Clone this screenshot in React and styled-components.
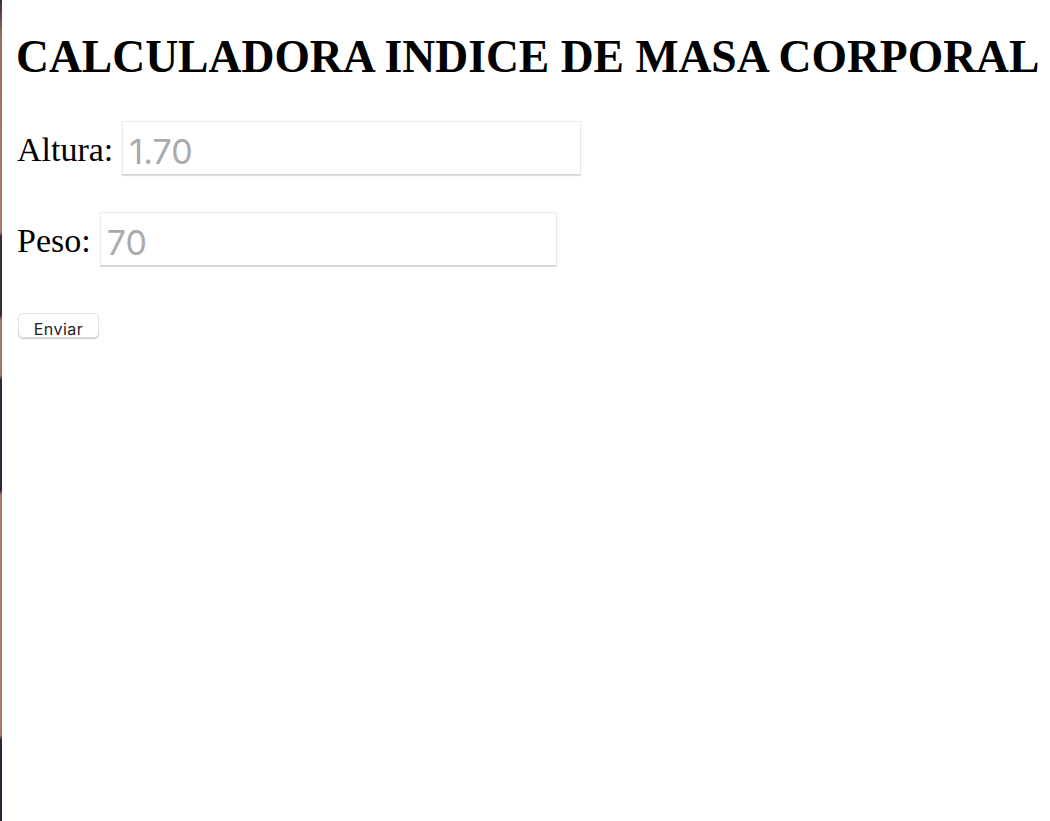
import React from "react";
import styled, { createGlobalStyle } from "styled-components";

// Estilos globales (incluye la franja del fondo de escritorio a la izquierda)
const GlobalStyle = createGlobalStyle`
    html, body {
        margin: 0;
        min-height: 100%;
    }
    body {
        min-height: 821px;
        font-family: "Liberation Serif", "Times New Roman", serif;
        background:
            linear-gradient(
                to bottom,
                #3b2b3a 0px, #9a705e 36px, #a87c68 232px,
                #3a2a3b 236px, #3a2a3b 315px, #a07664 320px,
                #a07664 375px, #33263a 380px, #33263a 490px,
                #a67b68 495px, #a67b68 735px, #2d2238 740px, #2d2238 821px
            ) left top / 2px 821px no-repeat,
            #fff;
    }
`;

// Contenedor de la página
const Page = styled.main`
    display: flex;
    flex-direction: column;
    align-items: flex-start;
    padding: 29px 0 0 16px;
`;

// Título
const Title = styled.h1`
    margin: 0 0 36px;
    font-size: 45.6px;
    line-height: 56px;
    font-weight: bold;
    color: #000;
    white-space: nowrap;
`;

// Formulario
const Form = styled.form`
    display: flex;
    flex-direction: column;
    align-items: flex-start;
`;

// Fila con etiqueta + campo
const Row = styled.div`
    display: flex;
    align-items: center;
    gap: 9px;
    margin-bottom: 37px;
`;

const Label = styled.label`
    font-size: 34px;
    line-height: 40px;
    color: #000;
    padding: 4px 0 0 1px;
`;

const Input = styled.input`
    box-sizing: border-box;
    width: ${(props) => props.width || "459px"};
    height: 54px;
    padding: 7px 6px 0;
    border: 1px solid #ececec;
    border-bottom-color: #d2d2d2;
    box-shadow: 0 1px 1px rgba(0, 0, 0, 0.12);
    background: #fff;
    font-family: Inter, "Liberation Sans", sans-serif;
    font-size: 34px;
    color: #333;
    outline: none;

    &::placeholder {
        color: #ababab;
    }
`;

// Botón
const Button = styled.button`
    box-sizing: border-box;
    width: 81px;
    height: 25px;
    margin: 10px 0 0 2px;
    padding: 7px 0 0;
    border: 1px solid #e2e2e2;
    border-radius: 5px;
    box-shadow: 0 1px 1px rgba(0, 0, 0, 0.22);
    background: #fff;
    font-family: Inter, "Liberation Sans", sans-serif;
    font-size: 16px;
    line-height: 16px;
    color: #222;
    letter-spacing: 0.5px;
`;

const App = () => {
    const handleSubmit = (e) => {
        e.preventDefault();
    };

    return (
        <>
            <GlobalStyle />
            <Page>
                <Title>CALCULADORA INDICE DE MASA CORPORAL</Title>
                <Form onSubmit={handleSubmit}>
                    <Row>
                        <Label htmlFor="altura">Altura:</Label>
                        <Input id="altura" placeholder="1.70" width="459px" />
                    </Row>
                    <Row>
                        <Label htmlFor="peso">Peso:</Label>
                        <Input id="peso" placeholder="70" width="457px" />
                    </Row>
                    <Button type="submit">Enviar</Button>
                </Form>
            </Page>
        </>
    );
};

export default App;
